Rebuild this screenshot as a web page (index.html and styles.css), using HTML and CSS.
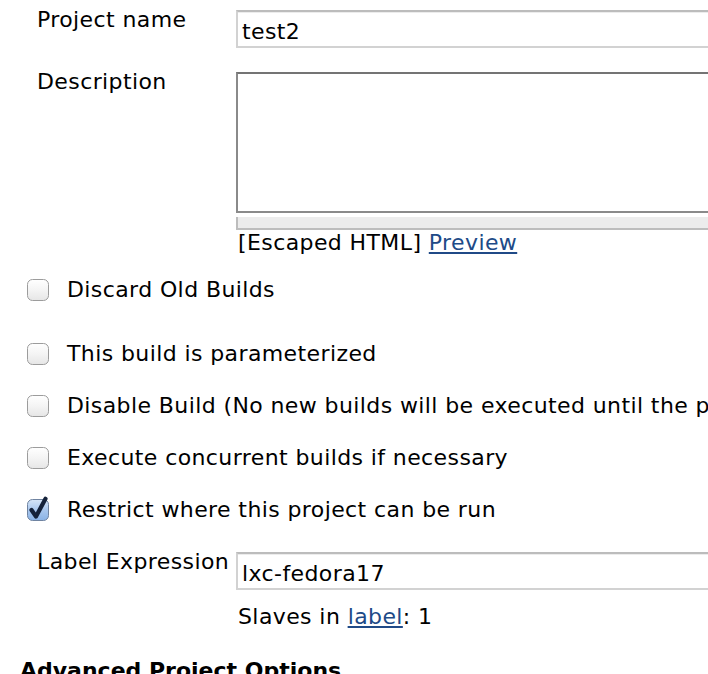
FILE: index.html
```html
<!DOCTYPE html>
<html>
<head>
<meta charset="utf-8">
<link rel="stylesheet" href="styles.css">
</head>
<body>
<div class="form">
  <div class="field-row">
    <div class="field-label">Project name</div>
    <div class="field-control"><input class="text-input" type="text" value="test2"></div>
  </div>
  <div class="field-row desc-row">
    <div class="field-label">Description</div>
    <div class="field-control">
      <textarea class="desc-area"></textarea>
      <div class="grip"></div>
      <div class="help-text">[Escaped HTML] <a href="#" class="link">Preview</a></div>
    </div>
  </div>

  <div class="checks">
    <div class="check-row">
      <svg class="cb" width="24" height="26" viewBox="0 0 24 26"><defs><linearGradient id="g1" x1="0" y1="0" x2="0" y2="1"><stop offset="0" stop-color="#ffffff"/><stop offset="0.5" stop-color="#f4f4f4"/><stop offset="1" stop-color="#e6e6e6"/></linearGradient></defs><rect x="1.5" y="3.5" width="21" height="21" rx="5" fill="url(#g1)" stroke="#9c9c9c"/></svg>
      <span>Discard Old Builds</span>
    </div>
    <div class="check-row after-gap">
      <svg class="cb" width="24" height="26" viewBox="0 0 24 26"><rect x="1.5" y="3.5" width="21" height="21" rx="5" fill="url(#g1)" stroke="#9c9c9c"/></svg>
      <span>This build is parameterized</span>
    </div>
    <div class="check-row">
      <svg class="cb" width="24" height="26" viewBox="0 0 24 26"><rect x="1.5" y="3.5" width="21" height="21" rx="5" fill="url(#g1)" stroke="#9c9c9c"/></svg>
      <span class="clip-text">Disable Build (No new builds will be executed until the project is re-enabled.)</span>
    </div>
    <div class="check-row">
      <svg class="cb" width="24" height="26" viewBox="0 0 24 26"><rect x="1.5" y="3.5" width="21" height="21" rx="5" fill="url(#g1)" stroke="#9c9c9c"/></svg>
      <span>Execute concurrent builds if necessary</span>
    </div>
    <div class="check-row">
      <svg class="cb" width="24" height="26" viewBox="0 0 24 26"><defs><linearGradient id="g2" x1="0" y1="0" x2="0" y2="1"><stop offset="0" stop-color="#d7e6f8"/><stop offset="0.5" stop-color="#a9c7ee"/><stop offset="1" stop-color="#8ab3e6"/></linearGradient></defs><rect x="1.5" y="3.5" width="21" height="21" rx="5" fill="url(#g2)" stroke="#6f83a0"/><path d="M5.5 14 L10 20.5 L19.5 2.8" fill="none" stroke="#15223a" stroke-width="4.2" stroke-linecap="round" stroke-linejoin="round"/></svg>
      <span>Restrict where this project can be run</span>
    </div>
  </div>

  <div class="field-row label-row">
    <div class="field-label">Label Expression</div>
    <div class="field-control">
      <input class="text-input" type="text" value="lxc-fedora17">
      <div class="slaves">Slaves in <a href="#" class="link">label</a>: 1</div>
    </div>
  </div>

  <h2 class="section-title">Advanced Project Options</h2>
</div>
</body>
</html>
```

FILE: styles.css
```css
html {
  overflow: hidden;
}
body {
  margin: 0;
  font-family: "DejaVu Sans", Verdana, sans-serif;
  font-size: 22px;
  line-height: 26px;
  letter-spacing: 0.4px;
  color: #000;
  background: #fff;
}
.form {
  padding-top: 10px;
  width: 708px;
}
.field-row {
  display: grid;
  grid-template-columns: 199px minmax(0, 1fr);
  padding-left: 37px;
}
.field-label {
  line-height: 20px;
  white-space: nowrap;
}
.field-control {
  min-width: 0;
}
.text-input {
  display: block;
  box-sizing: border-box;
  width: 560px;
  height: 38px;
  margin: 0;
  padding: 6px 4px 2px;
  border: 2px solid #d2d2d2;
  border-top-color: #bcbcbc;
  box-shadow: inset 0 1px 0 #ececec;
  font-family: inherit;
  font-size: 22px;
  line-height: 26px;
  letter-spacing: 0.4px;
  color: #000;
  background: #fff;
  outline: none;
}
.desc-row {
  margin-top: 24px;
}
.desc-area {
  display: block;
  box-sizing: border-box;
  width: 560px;
  height: 141px;
  margin: 0;
  padding: 2px;
  border: 2px solid #8a8a8a;
  border-top-color: #747474;
  resize: none;
  background: #fff;
  font-family: inherit;
  font-size: 22px;
  outline: none;
}
.grip {
  box-sizing: border-box;
  width: 560px;
  height: 13px;
  margin-top: 4px;
  background: #ececec;
  border-left: 2px solid #bdbdbd;
  border-bottom: 2px solid #bdbdbd;
}
.help-text {
  padding-left: 2px;
  white-space: nowrap;
}
.link {
  color: #204a87;
  text-decoration: underline;
}
.checks {
  margin-top: 21px;
}
.check-row {
  display: flex;
  align-items: center;
  height: 26px;
  padding-left: 26px;
  gap: 17px;
  white-space: nowrap;
}
.check-row + .check-row {
  margin-top: 26px;
}
.check-row.after-gap {
  margin-top: 38px;
}
.clip-text {
  overflow: hidden;
  min-width: 0;
}
.cb {
  flex: none;
  margin-top: -3px;
}
.label-row {
  margin-top: 29px;
}
.slaves {
  margin-top: 14px;
  padding-left: 2px;
  white-space: nowrap;
}
.section-title {
  margin: 28px 0 0;
  padding-left: 20px;
  font-size: 22px;
  line-height: 26px;
  font-weight: bold;
  letter-spacing: 0;
}
```
